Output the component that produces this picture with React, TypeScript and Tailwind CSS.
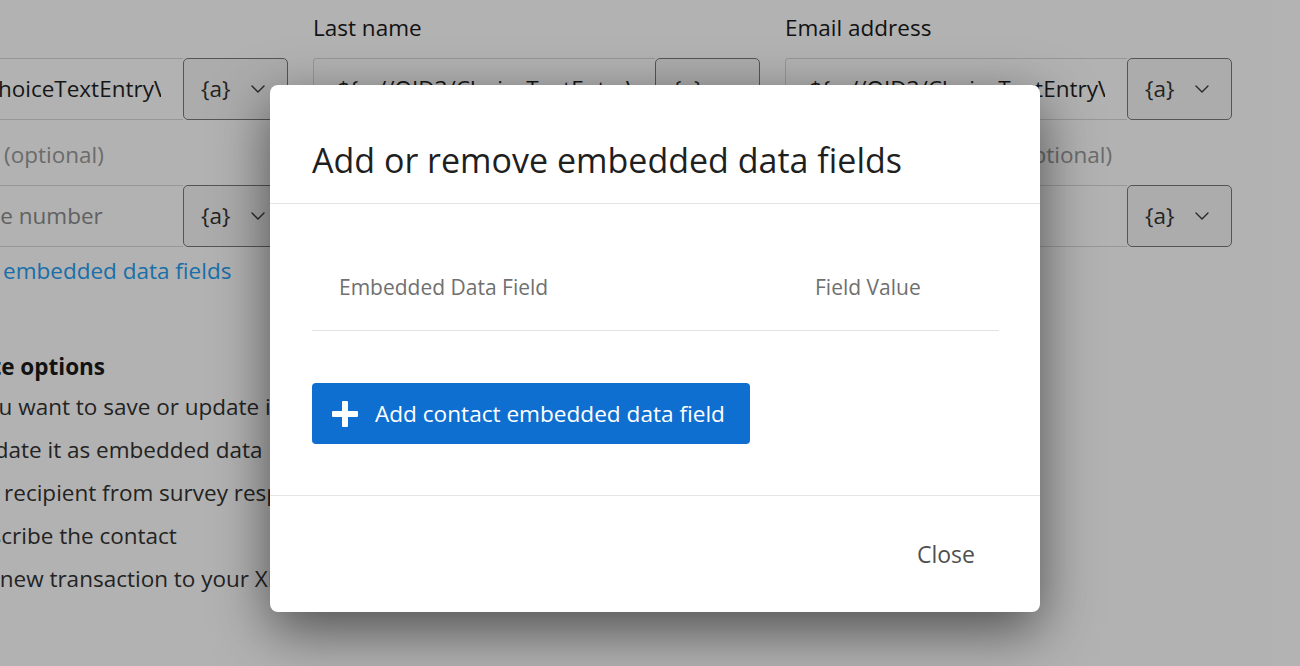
import React from "react";

function Chevron() {
  return (
    <svg width="14" height="8" viewBox="0 0 14 8" fill="none" stroke="#3a3a3a" strokeWidth="1.4" strokeLinecap="round" strokeLinejoin="round">
      <path d="M1 1l6 6 6-6" />
    </svg>
  );
}

function PlusIcon() {
  return (
    <svg width="26" height="26" viewBox="0 0 26 26" fill="#ffffff">
      <rect x="10" y="0" width="6" height="26" rx="1" />
      <rect x="0" y="10" width="26" height="6" rx="1" />
    </svg>
  );
}

function FieldInput({ value, placeholder }: { value?: string; placeholder?: string }) {
  return (
    <div className="flex h-[62px]">
      <div className="flex min-w-0 flex-1 items-center overflow-hidden rounded-l-[4px] border border-r-0 border-[#d9d9d9] bg-white pl-[23px] pr-[22px]">
        {value ? (
          <span className="overflow-hidden whitespace-nowrap text-[#1f1f1f]">{value}</span>
        ) : (
          <span className="overflow-hidden whitespace-nowrap text-[#8c8c8c]">{placeholder}</span>
        )}
      </div>
      <div className="flex w-[105px] shrink-0 items-center justify-between rounded-[5px] border border-[#7a7a7a] bg-[#f6f6f6] pl-[17px] pr-[22px] text-[#333]">
        <span>{"{a}"}</span>
        <Chevron />
      </div>
    </div>
  );
}

function Label({ text, optional }: { text: string; optional?: boolean }) {
  return (
    <div className="whitespace-nowrap pt-[2px] leading-[34px] text-[#1a1a1a]">
      {text}
      {optional && <span className="text-[#9a9a9a]"> (optional)</span>}
    </div>
  );
}

function Option({ text }: { text: string }) {
  return (
    <div className="flex h-[43px] items-center gap-[16px] whitespace-nowrap text-[#333]">
      <span className="h-[20px] w-[20px] shrink-0 rounded-[3px] border border-[#8a8a8a] bg-white" />
      <span>{text}</span>
    </div>
  );
}

export default function App() {
  return (
    <div className="relative h-[666px] w-[1300px] overflow-hidden bg-white font-['Open_Sans','Liberation_Sans',sans-serif] text-[22.5px]">
      {/* page under the dialog */}
      <div className="ml-[-159px] w-[1400px] pt-[9px]">
        <div className="grid grid-cols-[447px_447px_447px] gap-x-[25px]">
          <div>
            <Label text="First name" />
            <div className="mt-[13px]">
              <FieldInput value="${q://QID1/ChoiceTextEntryValue}" />
            </div>
            <div className="mt-[16px]">
              <Label text="Phone number" optional />
            </div>
            <div className="mt-[13px]">
              <FieldInput placeholder="Enter a phone number" />
            </div>
          </div>
          <div>
            <Label text="Last name" />
            <div className="mt-[13px]">
              <FieldInput value="${q://QID3/ChoiceTextEntryValue}" />
            </div>
            <div className="mt-[16px]">
              <Label text="Language" optional />
            </div>
            <div className="mt-[13px]">
              <FieldInput placeholder="Language" />
            </div>
          </div>
          <div>
            <Label text="Email address" />
            <div className="mt-[13px]">
              <FieldInput value="${q://QID3/ChoiceTextEntryValue}" />
            </div>
            <div className="mt-[16px]">
              <Label text="External reference ID" optional />
            </div>
            <div className="mt-[13px]">
              <FieldInput placeholder="" />
            </div>
          </div>
        </div>

        <div className="mt-[7px] leading-[34px] text-[#27a0f2]">Add or remove embedded data fields</div>

        <div className="mt-[62px] font-bold leading-[34px] text-[#1a1a1a]">Contact update options</div>
        <div className="mt-[1px]">
          <Option text="Decide if you want to save or update information" />
          <Option text="Store or update it as embedded data" />
          <Option text="Exclude the recipient from survey responses" />
          <Option text="And unsubscribe the contact" />
          <Option text="Then add a new transaction to your XM Directory" />
        </div>
      </div>

      {/* overlay + dialog */}
      <div className="absolute inset-0 bg-black/30">
        <div className="ml-[270px] mt-[85px] w-[770px] overflow-hidden rounded-[8px] bg-white shadow-[0_18px_55px_rgba(0,0,0,0.55)]">
          <div className="border-b border-[#e4e4e4] px-[42px] pb-[20px] pt-[52px]">
            <h2 className="text-[34px] leading-[46px] text-[#1f1f1f]">Add or remove embedded data fields</h2>
          </div>

          <div className="pb-[51px] pl-[42px] pr-[41px] pt-[42px]">
            <div className="grid h-[85px] grid-cols-[476px_1fr] items-center border-b border-[#e2e2e2] text-[21px] text-[#707070]">
              <div className="pl-[27px]">Embedded Data Field</div>
              <div className="pl-[27px]">Field Value</div>
            </div>
            <button className="mt-[52px] flex h-[61px] w-[438px] items-center gap-[17px] rounded-[4px] bg-[#0f6fd1] pl-[20px] text-[22.6px] font-medium text-white">
              <PlusIcon />
              <span>Add contact embedded data field</span>
            </button>
          </div>

          <div className="flex h-[117px] items-center justify-end border-t border-[#e4e4e4] pr-[65px]">
            <button className="text-[23px] text-[#505050]">Close</button>
          </div>
        </div>
      </div>
    </div>
  );
}
